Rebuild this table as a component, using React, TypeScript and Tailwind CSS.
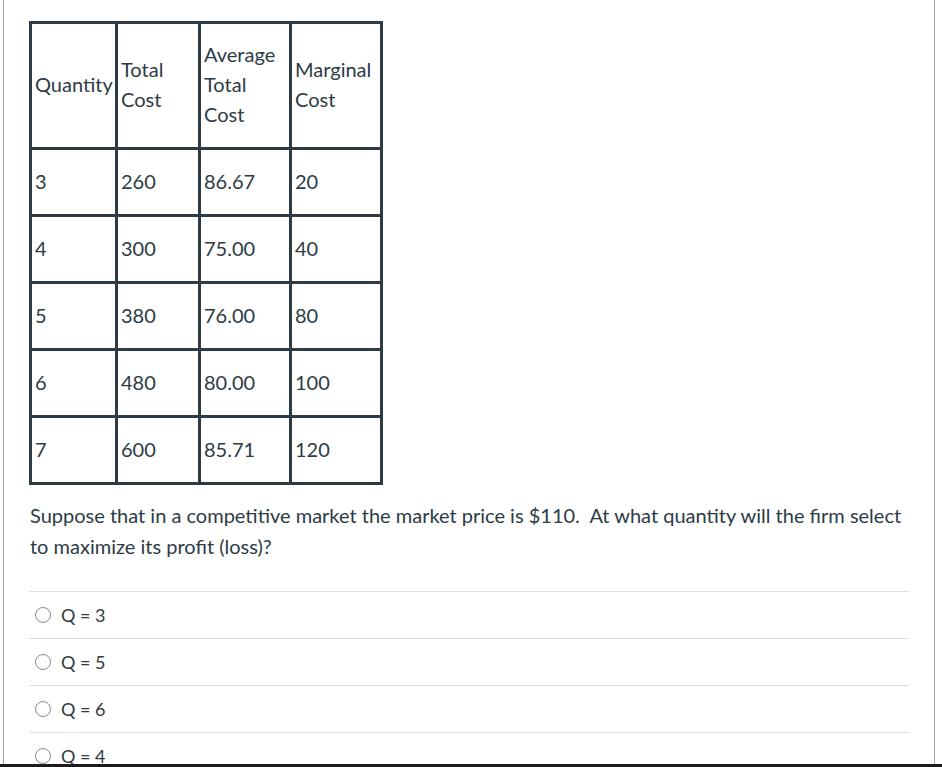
const rows = [
  ["3", "260", "86.67", "20"],
  ["4", "300", "75.00", "40"],
  ["5", "380", "76.00", "80"],
  ["6", "480", "80.00", "100"],
  ["7", "600", "85.71", "120"],
];

const options = ["Q = 3", "Q = 5", "Q = 6", "Q = 4"];

const cell = "border-[3px] border-[#2d3b45] pl-[3px] pr-0 align-middle text-left font-normal";

export default function App() {
  return (
    <div className="flex h-[767px] flex-col overflow-hidden bg-white font-['Lato','Liberation_Sans',sans-serif] text-[#2d3b45]">
      <div className="ml-[3px] w-[932px] flex-1 overflow-hidden border-x border-[#a5a5a5] pl-[25px] pt-[21px]">
        <table className="table-fixed border-collapse border-[3px] border-[#2d3b45] text-[20px] leading-[30px]">
          <thead>
            <tr className="h-[126px]">
              <th className={`${cell} w-[86px] pb-[3px]`}>Quantity</th>
              <th className={`${cell} w-[83px] pb-[3px]`}>
                Total
                <br />
                Cost
              </th>
              <th className={`${cell} w-[91px] pb-[3px]`}>
                Average
                <br />
                Total
                <br />
                Cost
              </th>
              <th className={`${cell} w-[91px] pb-[3px]`}>
                Marginal
                <br />
                Cost
              </th>
            </tr>
          </thead>
          <tbody>
            {rows.map((r) => (
              <tr key={r[0]} className="h-[67px]">
                {r.map((v, i) => (
                  <td key={i} className={`${cell} pb-[2px]`}>
                    {v}
                  </td>
                ))}
              </tr>
            ))}
          </tbody>
        </table>

        <p className="mt-[15px] w-[880px] pl-[1px] text-[20px] leading-[31px]">
          Suppose that in a competitive market the market price is $110.&nbsp; At what quantity will the firm select to
          maximize its profit (loss)?
        </p>

        <div className="mt-[29px] w-[880px]">
          {options.map((o) => (
            <label key={o} className="flex h-[47px] items-center border-t border-[#dcdfe1] pl-[6px] text-[18px]">
              <span className="block h-[16px] w-[16px] rounded-full border border-[#8a8a8a] bg-white" />
              <span className="ml-[10px]">{o}</span>
            </label>
          ))}
        </div>
      </div>
      <div className="h-[3px] bg-[#1c1c1c]" />
    </div>
  );
}
